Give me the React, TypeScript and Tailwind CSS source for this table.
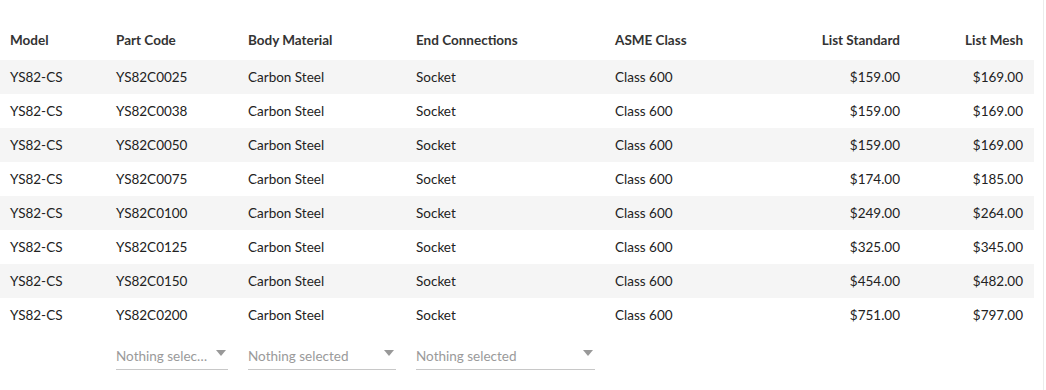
const rows = [
  ["YS82C0025", "$159.00", "$169.00"],
  ["YS82C0038", "$159.00", "$169.00"],
  ["YS82C0050", "$159.00", "$169.00"],
  ["YS82C0075", "$174.00", "$185.00"],
  ["YS82C0100", "$249.00", "$264.00"],
  ["YS82C0125", "$325.00", "$345.00"],
  ["YS82C0150", "$454.00", "$482.00"],
  ["YS82C0200", "$751.00", "$797.00"],
]

function Select({ label }: { label: string }) {
  return (
    <div className="flex items-center h-[26px] border-b border-[#c8c8c8] text-[#9a9a9a]">
      <span className="flex-1 truncate">{label}</span>
      <svg width="10" height="6" viewBox="0 0 10 6" className="ml-2 mr-[2px] -mt-2 shrink-0">
        <path d="M0 0 H10 L5 6 Z" fill="#999" />
      </svg>
    </div>
  )
}

export default function App() {
  return (
    <div
      className="w-[1044px] h-[390px] bg-white border-r border-[#ececec] pt-5 text-[13.5px] text-[#222]"
      style={{ fontFamily: "Lato, 'Open Sans', sans-serif" }}
    >
      <table className="w-[1034px] table-fixed border-collapse">
        <colgroup>
          <col className="w-[106px]" />
          <col className="w-[132px]" />
          <col className="w-[168px]" />
          <col className="w-[199px]" />
          <col className="w-[150px]" />
          <col className="w-[155px]" />
          <col className="w-[124px]" />
        </colgroup>
        <thead>
          <tr className="h-10 font-bold text-[#333]">
            <th className="px-[10px] text-left">Model</th>
            <th className="px-[10px] text-left">Part Code</th>
            <th className="px-[10px] text-left">Body Material</th>
            <th className="px-[10px] text-left">End Connections</th>
            <th className="px-[10px] text-left">ASME Class</th>
            <th className="px-[10px] text-right">List Standard</th>
            <th className="pl-[10px] pr-[11px] text-right">List Mesh</th>
          </tr>
        </thead>
        <tbody>
          {rows.map((r, i) => (
            <tr key={r[0]} className={`h-[34px] ${i % 2 === 0 ? "bg-[#f5f5f5]" : "bg-white"}`}>
              <td className="px-[10px]">YS82-CS</td>
              <td className="px-[10px]">{r[0]}</td>
              <td className="px-[10px]">Carbon Steel</td>
              <td className="px-[10px]">Socket</td>
              <td className="px-[10px]">Class 600</td>
              <td className="px-[10px] text-right">{r[1]}</td>
              <td className="pl-[10px] pr-[11px] text-right">{r[2]}</td>
            </tr>
          ))}
          <tr className="h-[58px] align-top">
            <td />
            <td className="px-[10px] pt-3">
              <Select label="Nothing selected" />
            </td>
            <td className="px-[10px] pt-3">
              <Select label="Nothing selected" />
            </td>
            <td className="px-[10px] pt-3">
              <Select label="Nothing selected" />
            </td>
            <td />
            <td />
            <td />
          </tr>
        </tbody>
      </table>
    </div>
  )
}
